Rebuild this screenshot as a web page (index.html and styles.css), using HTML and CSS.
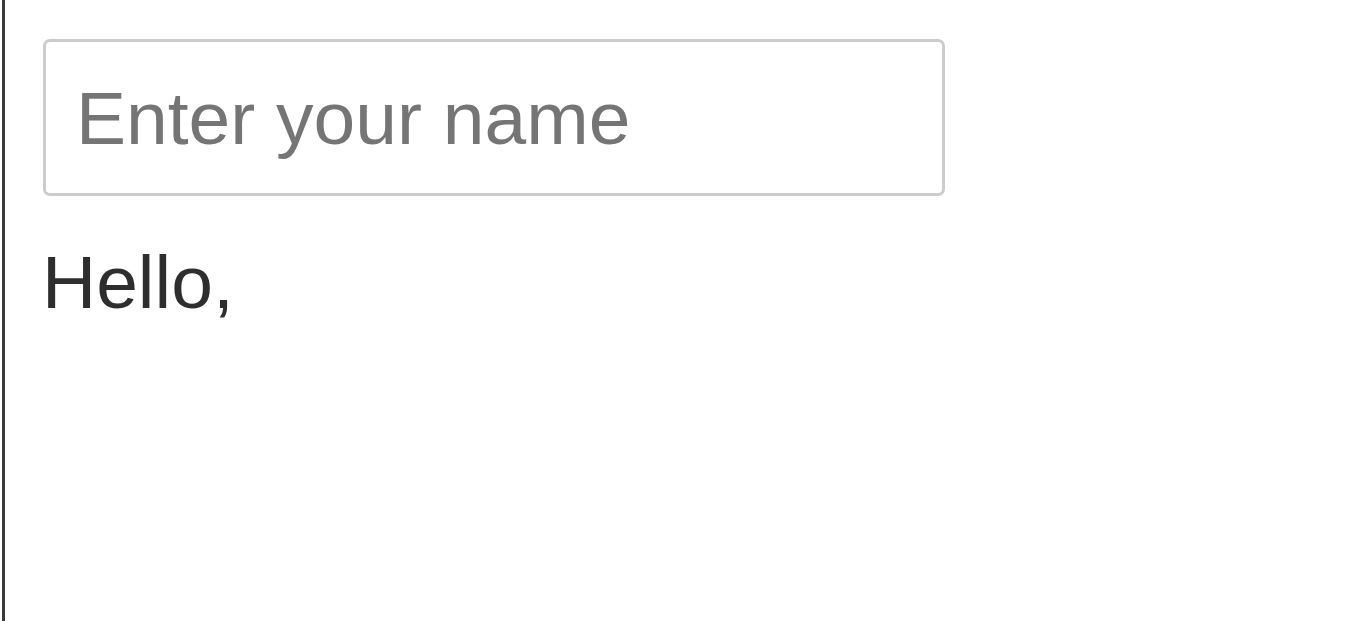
FILE: index.html
```html
<!DOCTYPE html>
<html>
<head>
<meta charset="utf-8">
<link rel="stylesheet" href="styles.css">
</head>
<body>
<div class="frame">
  <div class="content">
    <input class="name-input" type="text" placeholder="Enter your name">
    <p class="greeting">Hello,</p>
  </div>
</div>
</body>
</html>
```
FILE: styles.css
```css
html, body {
  margin: 0;
  padding: 0;
  background: #ffffff;
}
.frame {
  margin-left: 2px;
  border-left: 3px solid #3a3a3a;
  height: 621px;
  box-sizing: border-box;
}
.content {
  padding: 39px 0 0 38px;
  font-family: "Liberation Sans", Arial, sans-serif;
}
.name-input {
  display: block;
  box-sizing: border-box;
  width: 902px;
  height: 157px;
  margin: 0;
  padding: 0 30px;
  border: 3px solid #cccccc;
  border-radius: 7px;
  font-family: "Liberation Sans", Arial, sans-serif;
  font-size: 75px;
  color: #333333;
  background: #ffffff;
  outline: none;
}
.name-input::placeholder {
  color: #757575;
  opacity: 1;
}
.greeting {
  margin: 43px 0 0 -1px;
  font-size: 75px;
  line-height: 86px;
  color: #2e2e2e;
}
```
